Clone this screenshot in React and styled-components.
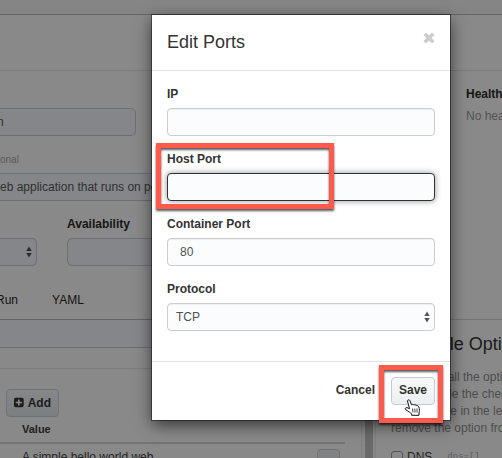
import React from "react";
import styled, { createGlobalStyle } from "styled-components";

const Global = createGlobalStyle`
  * { box-sizing: border-box; }
  html, body { margin: 0; overflow: hidden; background: #898989; }
  body { font-family: "Liberation Sans", Arial, sans-serif; font-size: 12px; line-height: 16px; color: #242424; }
  h2, h3, p { margin: 0; font-weight: 400; }
`;

const Screen = styled.div`
  position: relative;
  width: 502px;
  height: 458px;
  overflow: hidden;
  background: #898989;
`;

const Page = styled.div`
  display: flex;
  flex-direction: column;
  height: 458px;
`;

const TopBar = styled.div`
  height: 15px;
  flex: none;
  background: #858585;
  border-bottom: 1px solid #656565;
`;

const PageHeader = styled.div`
  height: 56px;
  flex: none;
  border-bottom: 1px solid #7b7b7b;
`;

const Columns = styled.div`
  display: flex;
  flex: 1;
  min-height: 0;
`;

const Main = styled.div`
  width: 361px;
  flex: none;
  display: flex;
  flex-direction: column;
  white-space: nowrap;

  > * {
    flex-shrink: 0;
  }
`;

const Gutter = styled.div`
  width: 15px;
  flex: none;
  display: flex;
  align-items: flex-end;
`;

const ScrollBar = styled.div`
  width: 15px;
  height: 139px;
  border-left: 1px solid #7f7f7f;
  border-right: 1px solid #7f7f7f;
  padding: 0 2px 0 3px;
  background: #6a6a6a content-box;
`;

const Side = styled.div`
  flex: 1;
  min-width: 0;
  display: flex;
  flex-direction: column;
  overflow: hidden;
  white-space: nowrap;

  > * {
    flex-shrink: 0;
  }
`;

const Strong = styled.span`
  font-weight: 700;
  color: #161616;
`;

const BackField = styled.div`
  height: 28px;
  flex: none;
  display: flex;
  align-items: center;
  justify-content: ${(p) => (p.$select ? "flex-end" : "flex-start")};
  width: ${(p) => p.$width}px;
  padding: 0 ${(p) => (p.$select ? 4 : 0)}px 1px 0;
  border: 1px solid #6d6f70;
  border-left-width: ${(p) => (p.$open ? 0 : 1)}px;
  border-radius: ${(p) => (p.$open ? "0 5px 5px 0" : "5px")};
  background: #84868a;
  color: #303030;
`;

const NameValue = styled.span`
  margin-left: -3px;
`;

const NameBlock = styled.div`
  padding: 37px 0 0;
`;

const Hint = styled.div`
  height: 37px;
  padding-top: 16px;
  font-size: 10px;
  color: #595959;
`;

const Description = styled.div`
  height: 28px;
  display: flex;
  align-items: center;
  padding-bottom: 1px;
  border-top: 1px solid #6d6f70;
  border-bottom: 1px solid #6d6f70;
  background: #84868a;
  color: #303030;
`;

const AvailabilityRow = styled.div`
  display: flex;
  gap: 30px;
  align-items: flex-end;
  height: 65px;
`;

const Stack = styled.div`
  display: flex;
  flex-direction: column;
  gap: 6px;
`;

const TabRow = styled.div`
  display: flex;
  gap: 34px;
  height: 53px;
  margin-left: -4px;
  padding-top: 26px;
  color: #141414;
`;

const CommandStrip = styled.div`
  height: 29px;
  border-top: 1px solid #646464;
  border-bottom: 1px solid #6b6d71;
  background: #84868a;
`;

const Environment = styled.div`
  margin-top: 20px;
  padding: 20px 0 0;
  border-top: 1px solid #7b7b7b;
`;

const AddButton = styled.div`
  display: flex;
  align-items: center;
  gap: 4px;
  width: 53px;
  height: 28px;
  margin-left: 6px;
  padding: 0 7px 1px;
  border: 1px solid #6c7277;
  border-radius: 4px;
  background: linear-gradient(#858789, #7c7f81);
  font-weight: 700;
  color: #1c1c1c;
`;

const TableHead = styled.div`
  height: 27px;
  width: 345px;
  padding: 5px 0 0 22px;
  border-bottom: 2px solid #747474;
  font-size: 11px;
  font-weight: 700;
  line-height: 15px;
  color: #202020;
`;

const TableRow = styled.div`
  display: flex;
  height: 30px;
  padding: 5px 0 0 22px;
  width: 340px;
  justify-content: space-between;
`;

const RowButton = styled.div`
  width: 23px;
  height: 24px;
  border: 1px solid #6c7277;
  border-radius: 4px;
  background: #808284;
`;

const Health = styled.div`
  height: 249px;
  padding: 15px 0 0 90px;
  border-bottom: 1px solid #737373;
`;

const HealthNote = styled.p`
  margin-top: 6px;
  color: #545454;
`;

const OptionsHeading = styled.h3`
  height: 33px;
  padding: 12px 0 0 15px;
  font-size: 18px;
  line-height: 24px;
  color: #1a1a1a;
`;

const OptionsText = styled.p`
  margin-top: 16px;
  padding-left: 15px;
  line-height: 17px;
  color: #4d4d4d;
`;

const OptionRow = styled.div`
  display: flex;
  align-items: center;
  padding: 12px 0 0 15px;
  gap: 4px;
`;

const CheckBox = styled.span`
  width: 12px;
  height: 12px;
  border: 1px solid #555;
  border-radius: 3px;
`;

const Code = styled.span`
  margin-left: 11px;
  font: 9px/16px "Liberation Mono", monospace;
  color: #5c5c5c;
`;

const Dialog = styled.section`
  position: absolute;
  left: 152px;
  top: 15px;
  width: 298px;
  height: 405px;
  display: flex;
  flex-direction: column;
  background: #fff;
  box-shadow: 0 0 0 1px rgba(0, 0, 0, 0.42), 0 5px 15px rgba(0, 0, 0, 0.62);
  color: #333;
`;

const DialogHeader = styled.header`
  display: flex;
  justify-content: space-between;
  height: 56px;
  padding: 16px 15px 0;
  border-bottom: 1px solid #e2e2e2;
`;

const DialogTitle = styled.h2`
  font-size: 18px;
  line-height: 22px;
`;

const CloseIcon = styled.svg`
  width: 12px;
  height: 12px;
  margin-top: 1px;
`;

const Form = styled.div`
  height: 290px;
  padding: 15px 15px 0;
  display: flex;
  flex-direction: column;
  gap: 15px;
`;

const Field = styled.label`
  display: flex;
  flex-direction: column;
  gap: 6px;
  font-weight: 700;
`;

const Box = styled.span`
  display: flex;
  align-items: center;
  justify-content: space-between;
  height: 28px;
  padding: 0 4px 1px ${(p) => (p.$select ? 8 : 12)}px;
  border: 1px solid ${(p) => (p.$focus ? "#303236" : "#ccc")};
  border-radius: 4px;
  background: #fbfcfe;
  box-shadow: ${(p) => (p.$focus ? "0 0 6px rgba(0,0,0,.42)" : "inset 0 1px 1px rgba(0,0,0,.06)")};
  font-weight: 400;
  color: #505050;
`;

const Arrows = styled.svg`
  width: 6px;
  height: 12px;
`;

const DialogFooter = styled.footer`
  display: flex;
  justify-content: flex-end;
  align-items: flex-start;
  gap: 16px;
  flex: 1;
  padding: 15px 15px 0;
  border-top: 1px solid #e2e2e2;
  font-weight: 700;
`;

const CancelButton = styled.span`
  line-height: 27px;
`;

const SaveButton = styled.span`
  width: 44px;
  height: 28px;
  border: 1px solid #c5cbd2;
  border-radius: 4px;
  background: linear-gradient(#f7f8fa, #eceff2);
  line-height: 25px;
  text-align: center;
`;

const Highlight = styled.div`
  position: absolute;
  left: ${(p) => p.$x}px;
  top: ${(p) => p.$y}px;
  width: ${(p) => p.$w}px;
  height: ${(p) => p.$h}px;
  border: 5px solid #ff5a4b;
  filter: drop-shadow(0 2px 1px rgba(0, 0, 0, 0.65));
`;

const Pointer = styled.svg`
  position: absolute;
  left: 404px;
  top: 399px;
  width: 17px;
  height: 17px;
`;

const UpDown = ({ color = "#555" }) => (
  <Arrows viewBox="0 0 6 12">
    <path d="M3 .5 5.7 5H.3ZM.3 7h5.4L3 11.5Z" fill={color} />
  </Arrows>
);

const LabeledField = ({ label, value, focus, select }) => (
  <Field>
    {label}
    <Box $focus={focus} $select={select}>
      <span>{value}</span>
      {select && <UpDown />}
    </Box>
  </Field>
);

export default function App() {
  return (
    <>
      <Global />
      <Screen>
        <Page>
          <TopBar />
          <PageHeader />
          <Columns>
            <Main>
              <NameBlock>
                <BackField $width={136} $open>
                  <NameValue>n</NameValue>
                </BackField>
              </NameBlock>
              <Hint>onal</Hint>
              <Description>eb application that runs on port 80</Description>
              <AvailabilityRow>
                <BackField $width={37} $open $select>
                  <UpDown color="#2b2b2b" />
                </BackField>
                <Stack>
                  <Strong>Availability</Strong>
                  <BackField $width={200} />
                </Stack>
              </AvailabilityRow>
              <TabRow>
                <span>Run</span>
                <span>YAML</span>
              </TabRow>
              <CommandStrip />
              <Environment>
                <AddButton>
                  <svg width="11" height="11" viewBox="0 0 11 11">
                    <rect width="11" height="11" rx="2" fill="#1c1c1c" />
                    <path d="M5.5 2v7M2 5.5h7" stroke="#8b8b8b" strokeWidth="1.8" />
                  </svg>
                  Add
                </AddButton>
                <TableHead>Value</TableHead>
                <TableRow>
                  <span>A simple hello world web</span>
                  <RowButton />
                </TableRow>
              </Environment>
            </Main>
            <Gutter>
              <ScrollBar />
            </Gutter>
            <Side>
              <Health>
                <Strong>Health Check</Strong>
                <HealthNote>No health checks</HealthNote>
              </Health>
              <OptionsHeading>Available Options</OptionsHeading>
              <OptionsText>
                Below are all the options.
                <br />
                Next, enable the checkbox
                <br />
                element one in the left or
                <br />
                remove the option from
              </OptionsText>
              <OptionRow>
                <CheckBox />
                DNS
                <Code>dns=[]</Code>
              </OptionRow>
            </Side>
          </Columns>
        </Page>
        <Dialog>
          <DialogHeader>
            <DialogTitle>Edit Ports</DialogTitle>
            <CloseIcon viewBox="0 0 12 12">
              <path d="m1.700 1.700 8.600 8.600m0-8.600-8.600 8.600" stroke="#ccc" strokeWidth="3.500" />
            </CloseIcon>
          </DialogHeader>
          <Form>
            <LabeledField label="IP" />
            <LabeledField label="Host Port" focus />
            <LabeledField label="Container Port" value="80" />
            <LabeledField label="Protocol" value="TCP" select />
          </Form>
          <DialogFooter>
            <CancelButton>Cancel</CancelButton>
            <SaveButton>Save</SaveButton>
          </DialogFooter>
        </Dialog>
        <Highlight $x={156} $y={143} $w={178} $h={66} />
        <Highlight $x={379} $y={365} $w={64} $h={58} />
        <Pointer viewBox="0 0 17 17">
          <path
            d="M3.500 2C3.500 .8 5.300 .3 5.900 1.600L7.500 5.800C8.200 5 9.500 5.100 9.900 6.100 10.700 5.400 12 5.700 12.300 6.700 13.200 6.200 14.400 6.600 14.700 7.700 15.800 10.600 15.500 12.500 15 14V16.300H7.700V14.800C6.300 14 4.300 11.900 1.900 10.900.7 10.200 1.300 8.400 2.900 8.600L5.500 9.700Z"
            fill="#fff"
            stroke="#111"
            strokeLinejoin="round"
          />
          <path d="m8.500 9.500.5 4M10.700 9.500l.4 4M12.900 9.500l.2 4" stroke="#111" strokeWidth="0.800" fill="none" />
        </Pointer>
      </Screen>
    </>
  );
}
